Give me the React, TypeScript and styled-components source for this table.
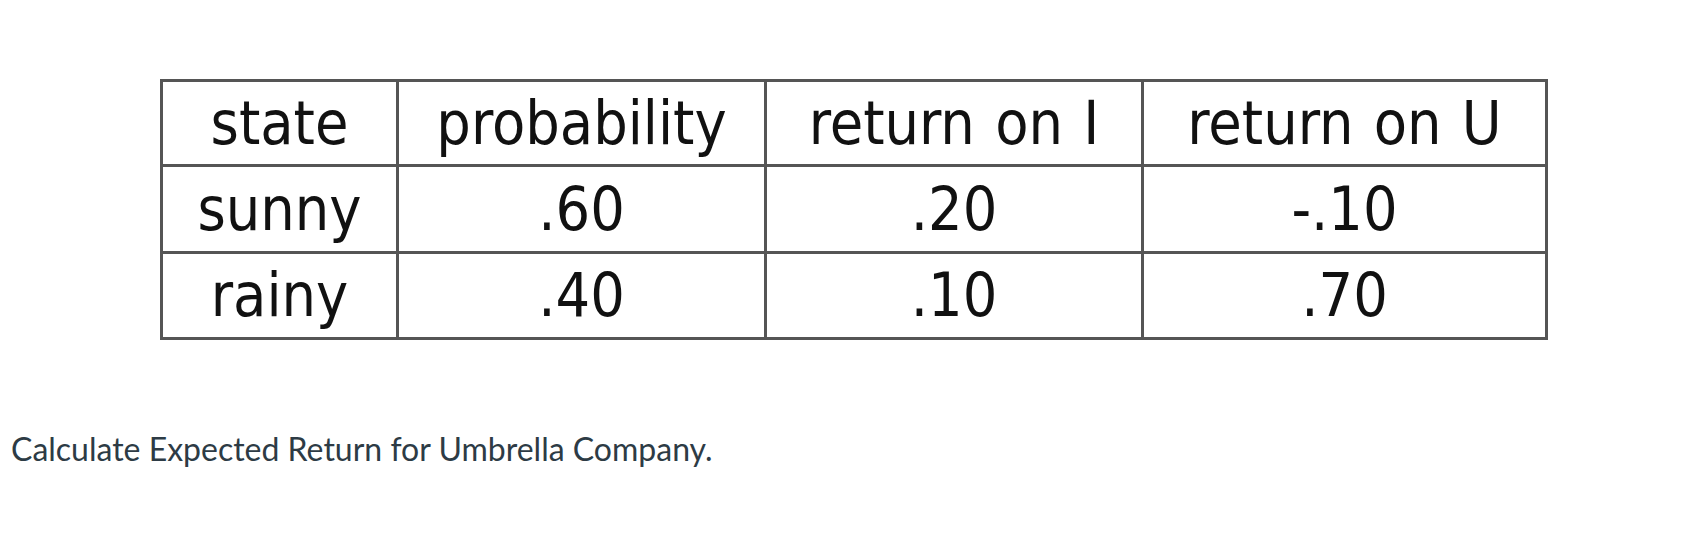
import styled, { createGlobalStyle } from 'styled-components'

const GlobalStyle = createGlobalStyle`
  body {
    margin: 0;
    background: #fff;
  }
`

const Page = styled.div`
  padding: 79px 0 0 0;
`

const TableWrap = styled.div`
  padding-left: 160px;
`

const Table = styled.table`
  border-collapse: collapse;
  table-layout: fixed;
  width: 1385px;
  font-family: "DejaVu Sans Condensed", "DejaVu Sans", sans-serif;
  font-stretch: condensed;
  font-size: 60.5px;
  color: #111;
`

const Cell = styled.td<{ $h: number }>`
  border: 3px solid #555;
  height: ${(p) => p.$h}px;
  padding: 0;
  text-align: center;
  vertical-align: middle;
  line-height: 1;
  word-spacing: 3px;
`

const Question = styled.p`
  margin: 89px 0 0 11px;
  font-family: Lato, "Open Sans", sans-serif;
  font-size: 32px;
  color: #2d3b45;
`

const widths = [236, 368, 377, 404]

const rows = [
  { h: 82, cells: ['state', 'probability', 'return on I', 'return on U'] },
  { h: 84, cells: ['sunny', '.60', '.20', '-.10'] },
  { h: 83, cells: ['rainy', '.40', '.10', '.70'] },
]

const App = () => {
  return (
    <Page>
      <GlobalStyle />
      <TableWrap>
        <Table>
          <colgroup>
            {widths.map((w, i) => (
              <col key={i} style={{ width: w }} />
            ))}
          </colgroup>
          <tbody>
            {rows.map((r, i) => (
              <tr key={i}>
                {r.cells.map((c, j) => (
                  <Cell key={j} $h={r.h}>
                    {c}
                  </Cell>
                ))}
              </tr>
            ))}
          </tbody>
        </Table>
      </TableWrap>
      <Question>Calculate Expected Return for Umbrella Company.</Question>
    </Page>
  )
}

export default App
